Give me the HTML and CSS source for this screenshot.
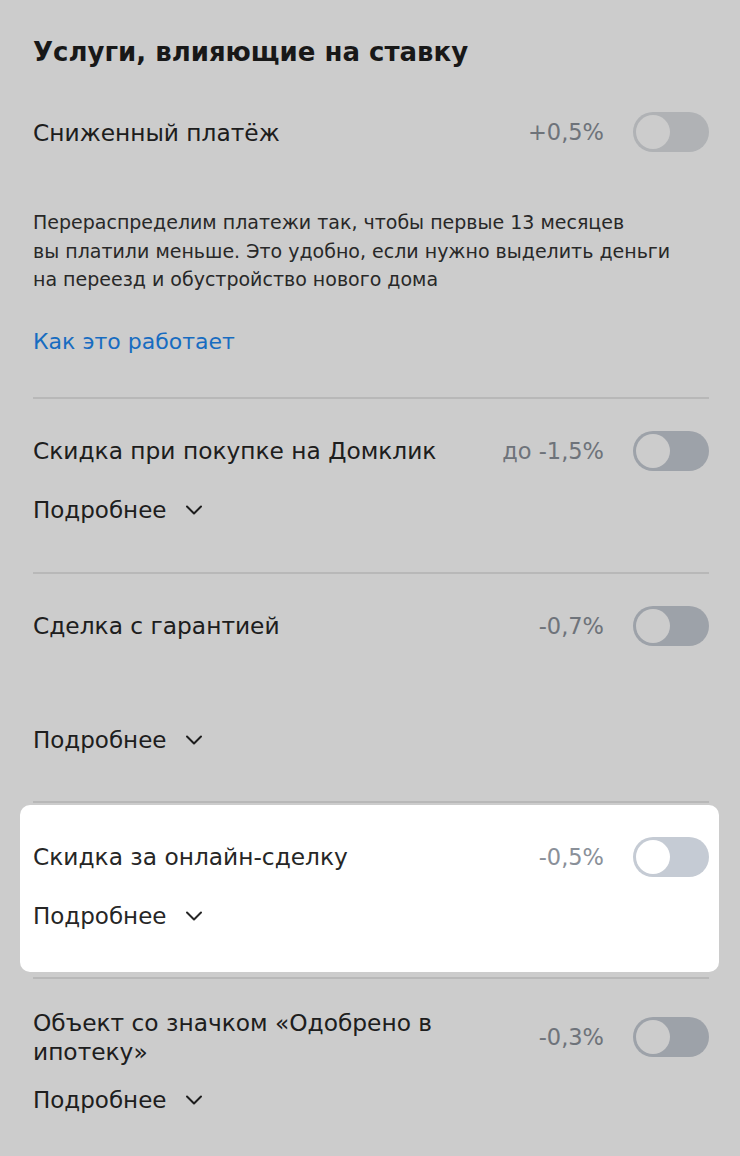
FILE: index.html
```html
<!DOCTYPE html>
<html lang="ru">
  <head>
    <meta charset="utf-8" />
    <title>Услуги, влияющие на ставку</title>
    <link rel="stylesheet" href="styles.css">
  </head>
  <body>
    <div class="overlay"></div>
    <main class="services">
      <h1 class="services-title">Услуги, влияющие на ставку</h1>

      <section class="service service-first">
        <div class="service-row">
          <span class="service-name">Сниженный платёж</span>
          <span class="service-rate">+0,5%</span>
          <span class="toggle toggle-muted"><span class="knob"></span></span>
        </div>
        <p class="service-desc">Перераспределим платежи так, чтобы первые 13 месяцев<br>вы платили меньше. Это удобно, если нужно выделить деньги<br>на переезд и обустройство нового дома</p>
        <a href="#" class="service-link">Как это работает</a>
      </section>

      <section class="service">
        <div class="service-row">
          <span class="service-name">Скидка при покупке на Домклик</span>
          <span class="service-rate">до -1,5%</span>
          <span class="toggle"><span class="knob"></span></span>
        </div>
        <button class="more">Подробнее
          <svg width="18" height="10" viewBox="0 0 18 10"><path d="M2 1.5 L9 8.5 L16 1.5" /></svg>
        </button>
      </section>

      <section class="service service-tall">
        <div class="service-row">
          <span class="service-name">Сделка с гарантией</span>
          <span class="service-rate">-0,7%</span>
          <span class="toggle"><span class="knob"></span></span>
        </div>
        <button class="more">Подробнее
          <svg width="18" height="10" viewBox="0 0 18 10"><path d="M2 1.5 L9 8.5 L16 1.5" /></svg>
        </button>
      </section>

      <section class="service service-spot">
        <div class="spot-card">
          <div class="service-row">
            <span class="service-name">Скидка за онлайн-сделку</span>
            <span class="service-rate">-0,5%</span>
            <span class="toggle"><span class="knob"></span></span>
          </div>
          <button class="more">Подробнее
            <svg width="18" height="10" viewBox="0 0 18 10"><path d="M2 1.5 L9 8.5 L16 1.5" /></svg>
          </button>
        </div>
      </section>

      <section class="service service-last">
        <div class="service-row">
          <span class="service-name">Объект со значком «Одобрено в<br>ипотеку»</span>
          <span class="service-rate">-0,3%</span>
          <span class="toggle"><span class="knob"></span></span>
        </div>
        <button class="more more-close">Подробнее
          <svg width="18" height="10" viewBox="0 0 18 10"><path d="M2 1.5 L9 8.5 L16 1.5" /></svg>
        </button>
      </section>
    </main>
  </body>
</html>
```

FILE: styles.css
```css
body,
h1,
p,
button {
  margin: 0;
  padding: 0;
  font-family: "DejaVu Sans", Verdana, sans-serif;
  box-sizing: border-box;
}

body {
  background-color: #fff;
  color: #262626;
}

.overlay {
  position: fixed;
  top: 0;
  left: 0;
  right: 0;
  bottom: 0;
  background-color: rgba(0, 0, 0, 0.2);
  z-index: 1;
}

.services {
  padding: 34px 31px 0 33px;
}
.services-title {
  font-size: 26px;
  font-weight: bold;
  line-height: 36px;
  color: #1f1f1f;
}

.service {
  border-top: 2px solid #e6e6e6;
  padding: 32px 0 48px;
}
.service-first {
  border-top: none;
  padding: 42px 0 41px;
}
.service-tall {
  padding-bottom: 47px;
}
.service-tall .more {
  margin-top: 80px;
}
.service-last {
  padding-top: 29px;
}

.service-row {
  display: flex;
  align-items: center;
  min-height: 40px;
}
.service-name {
  flex: 1;
  font-size: 23.3px;
  line-height: 29px;
}
.service-rate {
  font-size: 22.5px;
  color: #8a9099;
  margin-right: 29px;
}

.toggle {
  display: flex;
  align-items: center;
  width: 76px;
  height: 40px;
  padding: 3px;
  border-radius: 20px;
  background-color: #c5cbd4;
  box-sizing: border-box;
}
.toggle-muted {
  background-color: #dcdfe3;
}
.knob {
  width: 34px;
  height: 34px;
  border-radius: 50%;
  background-color: #fff;
}

.service-desc {
  margin-top: 56px;
  font-size: 19px;
  line-height: 28.5px;
  color: #333;
}
.service-link {
  display: inline-block;
  margin-top: 34px;
  font-size: 22px;
  line-height: 28px;
  color: #1d88f2;
  text-decoration: none;
}

.more {
  display: flex;
  align-items: center;
  gap: 19px;
  margin-top: 25px;
  background: none;
  border: none;
  font-size: 23px;
  line-height: 28px;
  color: #262626;
}
.more-close {
  margin-top: 20px;
}
.more svg path {
  fill: none;
  stroke: #262626;
  stroke-width: 2;
  stroke-linecap: round;
  stroke-linejoin: round;
}

.service-spot {
  padding: 2px 0 5px;
}
.spot-card {
  position: relative;
  z-index: 2;
  margin: 0 -10px 0 -13px;
  padding: 32px 10px 42px 13px;
  background-color: #fff;
  border-radius: 10px;
}
```
